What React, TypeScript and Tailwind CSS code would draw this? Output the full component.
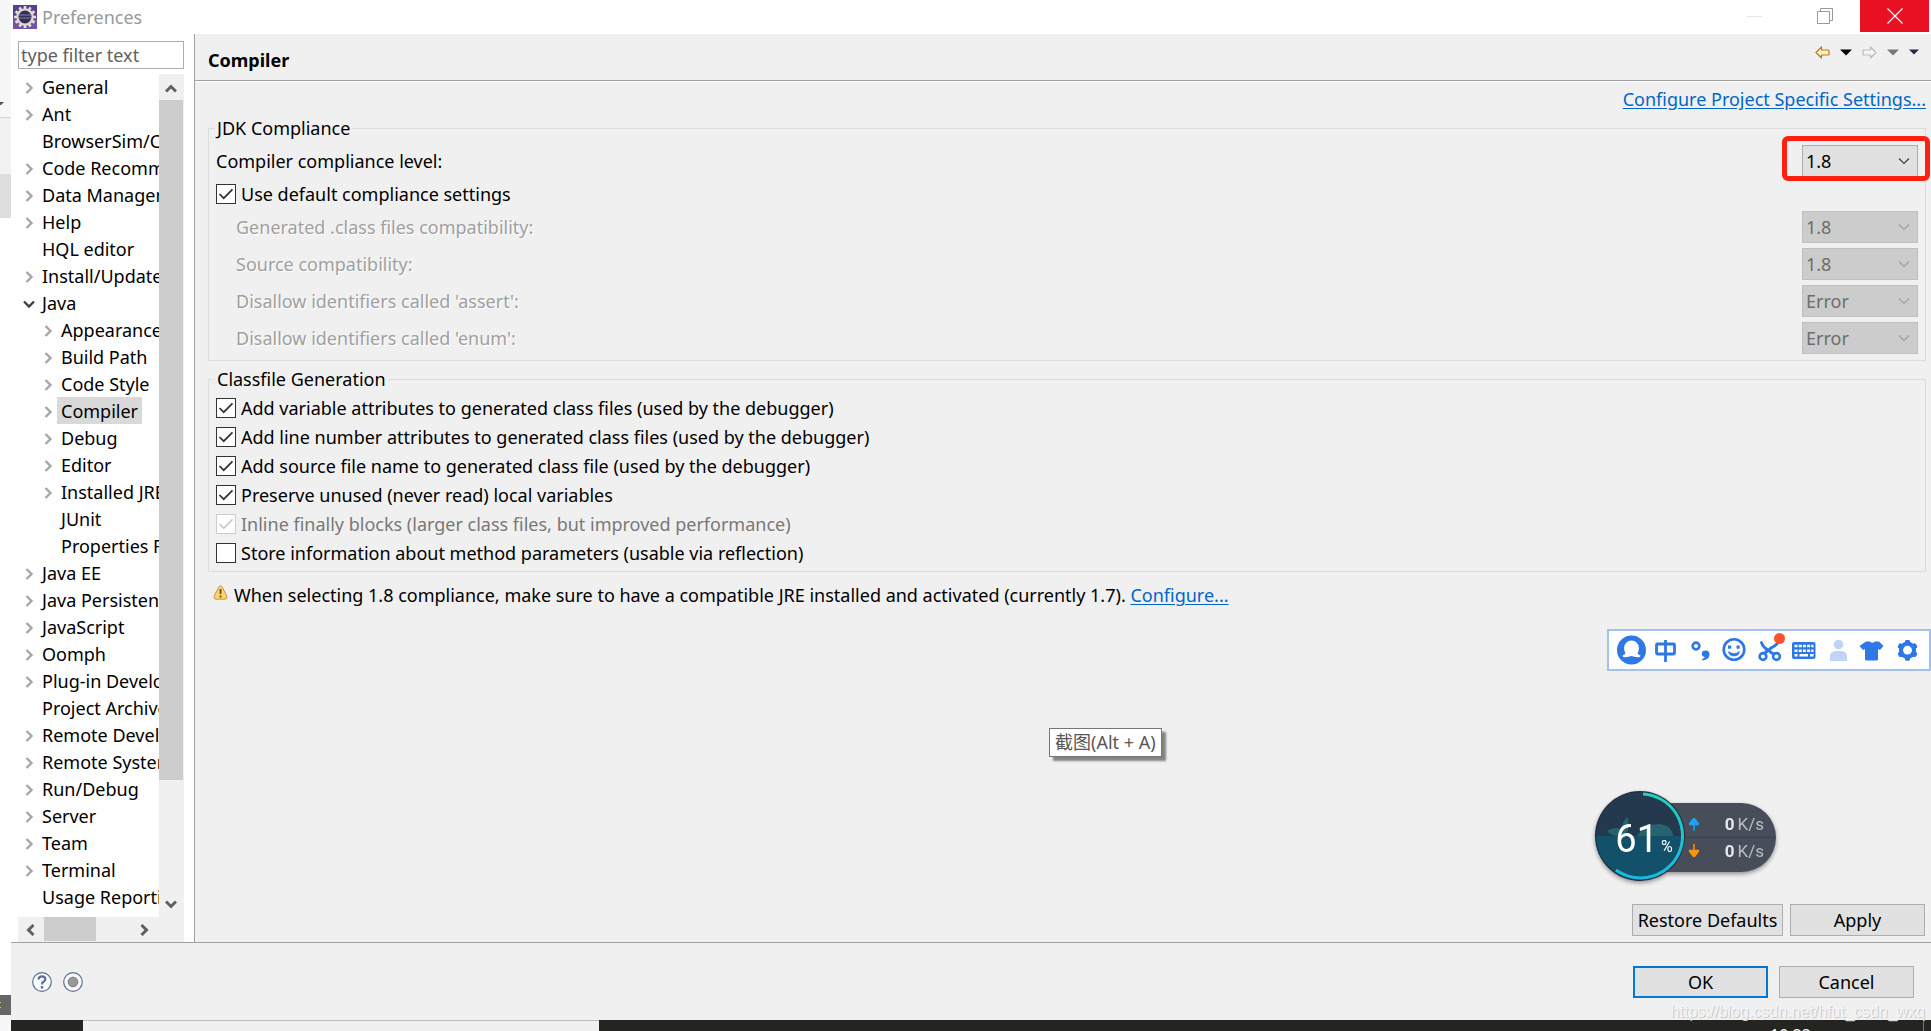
import React from "react";

type TreeItem = { label: string; level?: 0 | 1; state?: "closed" | "open" | "leaf"; selected?: boolean };

const TREE: TreeItem[] = [
  { label: "General" },
  { label: "Ant" },
  { label: "BrowserSim/Cordo", state: "leaf" },
  { label: "Code Recommenders" },
  { label: "Data Management" },
  { label: "Help" },
  { label: "HQL editor", state: "leaf" },
  { label: "Install/Update" },
  { label: "Java", state: "open" },
  { label: "Appearance", level: 1 },
  { label: "Build Path", level: 1 },
  { label: "Code Style", level: 1 },
  { label: "Compiler", level: 1, selected: true },
  { label: "Debug", level: 1 },
  { label: "Editor", level: 1 },
  { label: "Installed JREs", level: 1 },
  { label: "JUnit", level: 1, state: "leaf" },
  { label: "Properties Files", level: 1, state: "leaf" },
  { label: "Java EE" },
  { label: "Java Persistence" },
  { label: "JavaScript" },
  { label: "Oomph" },
  { label: "Plug-in Development" },
  { label: "Project Archives", state: "leaf" },
  { label: "Remote Development" },
  { label: "Remote Systems" },
  { label: "Run/Debug" },
  { label: "Server" },
  { label: "Team" },
  { label: "Terminal" },
  { label: "Usage Reporting", state: "leaf" },
];

const OVERRIDES = [
  { id: "target", label: "Generated .class files compatibility:", value: "1.8" },
  { id: "source", label: "Source compatibility:", value: "1.8" },
  { id: "assert", label: "Disallow identifiers called 'assert':", value: "Error" },
  { id: "enum", label: "Disallow identifiers called 'enum':", value: "Error" },
];

const CLASSFILE = [
  { label: "Add variable attributes to generated class files (used by the debugger)", checked: true },
  { label: "Add line number attributes to generated class files (used by the debugger)", checked: true },
  { label: "Add source file name to generated class file (used by the debugger)", checked: true },
  { label: "Preserve unused (never read) local variables", checked: true },
  { label: "Inline finally blocks (larger class files, but improved performance)", checked: true, disabled: true },
  { label: "Store information about method parameters (usable via reflection)", checked: false },
];

function Chevron({ className, d, width = 3 }: { className: string; d: string; width?: number }) {
  return (
    <svg viewBox="0 0 12 12" className={className} fill="none" stroke="currentColor" strokeWidth={width}>
      <path d={d} />
    </svg>
  );
}

const RIGHT = "M3.5 1 L8.5 6 L3.5 11";
const LEFT = "M8.5 1 L3.5 6 L8.5 11";
const DOWN = "M1 3.5 L6 8.5 L11 3.5";
const UP = "M1 8.5 L6 3.5 L11 8.5";

function TreeRow({ label, level = 0, state = "closed", selected }: TreeItem) {
  return (
    <li className={level ? "flex h-[27px] items-center pl-6" : "flex h-[27px] items-center pl-[5px]"}>
      <span className="flex w-[15px] shrink-0 pt-[3px]">
        {state === "closed" && <Chevron className="size-3 text-[#a6a6a6]" d={RIGHT} width={2.4} />}
        {state === "open" && <Chevron className="size-3 text-[#404040]" d={DOWN} width={2.4} />}
      </span>
      <button
        className={
          selected
            ? "h-full bg-[#d9d9d9] px-1 whitespace-nowrap"
            : "h-full px-1 whitespace-nowrap"
        }
      >
        {label}
      </button>
    </li>
  );
}

function Check({ label, checked, disabled }: { label: string; checked: boolean; disabled?: boolean }) {
  return (
    <label className={disabled ? "flex h-[29px] items-center gap-[5px] text-[#787878]" : "flex h-[29px] items-center gap-[5px]"}>
      <span className="relative flex size-5">
        <input
          type="checkbox"
          defaultChecked={checked}
          disabled={disabled}
          className="peer size-5 appearance-none border border-[#333] bg-white disabled:border-[#ccc]"
        />
        <svg
          viewBox="0 0 20 20"
          className="pointer-events-none absolute inset-0 hidden size-5 text-[#333] peer-checked:block peer-disabled:text-[#ccc]"
          fill="none"
          stroke="currentColor"
          strokeWidth="1.7"
        >
          <path d="M3.5 10 L7.7 14.2 L16.5 5.3" />
        </svg>
      </span>
      {label}
    </label>
  );
}

function Combo({ id, value, disabled }: { id: string; value: string; disabled?: boolean }) {
  return (
    <span className="relative flex w-[116px]">
      <select
        id={id}
        disabled={disabled}
        defaultValue={value}
        className="h-8 w-full appearance-none border border-[#adadad] bg-[#e1e1e1] pl-[3px] text-black disabled:border-[#bfbfbf] disabled:bg-[#ccc] disabled:text-[#6d6d6d] disabled:opacity-100"
      >
        <option>{value}</option>
      </select>
      <Chevron
        className={
          disabled
            ? "pointer-events-none absolute top-2.5 right-2 size-3 text-[#a0a0a0]"
            : "pointer-events-none absolute top-2.5 right-2 size-3 text-[#404040]"
        }
        d={DOWN}
        width={1.2}
      />
    </span>
  );
}

function EclipseIcon() {
  const teeth = Array.from({ length: 12 }, (_, i) => i * 30);
  return (
    <svg viewBox="0 0 24 24" className="size-6">
      <rect width="24" height="24" fill="#5b3f8c" />
      <rect y="14" width="24" height="10" fill="#7353a8" />
      {teeth.map((a) => (
        <rect key={a} x="10.7" y="1" width="2.6" height="4" fill="#e4e0d8" transform={`rotate(${a} 12 12)`} />
      ))}
      <circle cx="12" cy="12" r="7.6" fill="#353058" stroke="#dcd8d0" strokeWidth="2.2" />
      <path d="M6 10h12M6 13h12" stroke="#6a6496" strokeWidth="1.4" />
    </svg>
  );
}

function NavArrow({ className, flip, fill }: { className: string; flip?: boolean; fill: string }) {
  return (
    <svg viewBox="0 0 15 13" className={className} fill={fill} stroke="currentColor" strokeWidth="1.2" strokeLinejoin="round">
      <path d={flip ? "M14 6.5 L8.5 1 V4 H2 Q1 4 1 5 V8 Q1 9 2 9 H8.5 V12 Z" : "M1 6.5 L6.5 1 V4 H13 Q14 4 14 5 V8 Q14 9 13 9 H6.5 V12 Z"} />
    </svg>
  );
}

function Caret({ className }: { className: string }) {
  return (
    <svg viewBox="0 0 12 7" className={className} fill="currentColor">
      <path d="M0 0.5 H12 L6 6.5 Z" />
    </svg>
  );
}

function ImeBar() {
  const blue = "#2d78e6";
  return (
    <div className="absolute top-[629px] right-0 flex h-[42px] w-[324px] items-center border-2 border-[#a2c0f0] bg-white pl-2">
      <svg viewBox="0 0 308 38" className="h-[38px] w-[308px]" fill="none" stroke={blue} strokeWidth="2">
        <circle cx="14.5" cy="19" r="14.5" fill={blue} stroke="none" />
        <path
          d="M14.5 9.5 a7.5 7.500 0 0 1 7.500 7.500 q0 3 -1.500 5 q.5 1.500 3 2.500 q0 2.200 -3 1.800 q-3 -.3 -6 -1.300 q-3 1 -6 1.300 q-3 .4 -3 -1.800 q2.500 -1 3 -2.500 q-1.500 -2 -1.500 -5 a7.500 7.500 0 0 1 7.500 -7.500z"
          fill="#fff"
          stroke="none"
        />
        <g strokeWidth="2.8">
          <rect x="39.500" y="13" width="18" height="10" rx="1" />
          <path d="M48.500 9 V31" />
        </g>
        <circle cx="79" cy="15" r="3.400" strokeWidth="2.600" />
        <path d="M88.500 19.500 a4 4 0 0 1 4 4 q0 5 -7 6 q-1.500 -1 0 -1.600 q2 -.8 2.300 -2 q-3 -.5 -3 -3.200 a3.500 3.500 0 0 1 3.700 -3.200z" fill={blue} stroke="none" />
        <circle cx="117" cy="18.500" r="10.300" strokeWidth="2.600" />
        <path d="M111.500 20.500 q5.500 4 11 0 q-.5 4.500 -5.500 4.500 q-5 0 -5.500 -4.500z" fill={blue} strokeWidth=".6" />
        <rect x="111" y="14.500" width="3.200" height="3.200" fill={blue} stroke="none" />
        <rect x="119.500" y="14.500" width="3.200" height="3.200" fill={blue} stroke="none" />
        <path d="M144 10.500 q1 4 4 6.500 l9 6.500 M161 12 q-4 4 -7 5 l-7.500 6" strokeWidth="2.900" />
        <circle cx="146" cy="25.500" r="3.400" strokeWidth="2.600" />
        <circle cx="159.500" cy="25.500" r="3.400" strokeWidth="2.600" />
        <circle cx="162.500" cy="7.500" r="5.500" fill="#fb5331" stroke="none" />
        <rect x="175" y="11" width="23.500" height="17" rx="2" fill={blue} stroke="none" />
        <g stroke="#fff" strokeWidth="2.600">
          <path d="M177.500 15 H196.500" strokeDasharray="3 1.200" />
          <path d="M177.500 19.700 H196.500" strokeDasharray="3 1.200" />
          <path d="M177.500 24.300 h3 M182.500 24.300 h8.500 M193 24.300 h3.500" />
        </g>
        <g fill="#bfd5f8" stroke="none">
          <circle cx="221.500" cy="13.500" r="4.800" />
          <path d="M213 30 v-4 q0 -6 6 -6 h5 q6 0 6 6 v4z" />
        </g>
        <path d="M249 10.500 h4 q2 2.500 5 0 h4 l4.500 4.500 l-3.500 4 l-2 -1 v10 q0 1.500 -1.500 1.500 h-10 q-1.500 0 -1.500 -1.500 v-10 l-2 1 l-3.500 -4z" fill={blue} stroke="none" />
        <g fill={blue} stroke="none">
          {[0, 60, 120, 180, 240, 300].map((a) => (
            <rect key={a} x="288" y="9" width="5" height="20.500" rx="1.500" transform={`rotate(${a} 290.500 19.200)`} />
          ))}
          <circle cx="290.500" cy="19.200" r="8.600" />
          <circle cx="290.500" cy="19.200" r="4.400" fill="#fff" />
        </g>
      </svg>
    </div>
  );
}

function NetMonitor() {
  return (
    <div className="absolute top-[791px] right-[155px] flex h-[90px] w-[181px] items-center drop-shadow-[0_2px_2px_rgba(0,0,0,0.4)]">
      <div className="absolute top-3 right-0 flex h-[69px] w-[140px] flex-col justify-center rounded-r-full bg-[#484e59] font-[Roboto] text-[17px] text-[#b9bec6]">
        {[
          { color: "#18a4f4", d: "M5 13 V5 M0 6.5 L5 0 L10 6.5Z" },
          { color: "#ff9408", d: "M5 0 V8 M0 6.5 L5 13 L10 6.5Z" },
        ].map((r, i) => (
          <div
            key={r.color}
            className={i === 0 ? "flex h-[26px] items-center border-b border-[#3c424c] pr-3 pl-[53px]" : "flex h-[26px] items-center pr-3 pl-[53px]"}
          >
            <svg viewBox="0 0 10 13" className="mr-auto h-[13px] w-2.5" fill={r.color} stroke={r.color} strokeWidth="1.5">
              <path d={r.d} />
            </svg>
            <span className="mr-[3px] font-bold text-[#e4e7ec]">0</span>K/s
          </div>
        ))}
      </div>
      <div className="relative flex size-[90px] items-center justify-center text-white">
        <svg viewBox="0 0 90 90" className="absolute inset-0 size-[90px]">
          <defs>
            <clipPath id="dial">
              <circle cx="45" cy="45" r="44" />
            </clipPath>
            <linearGradient id="ring" x1="0" y1="0" x2="0" y2="1">
              <stop offset="0" stopColor="#22cfc0" />
              <stop offset="1" stopColor="#18b8e0" />
            </linearGradient>
          </defs>
          <circle cx="45" cy="45" r="45" fill="#1c2b3a" />
          <g clipPath="url(#dial)">
            <rect width="90" height="46" fill="#24394e" />
            <rect y="45" width="90" height="45" fill="#13506a" />
            <path d="M12 40 q8 -5 14 -2 q2 -8 6 -12 q3 7 1 13 q-3 6 -9 6 q-8 0 -12 -5z M42 45 q8 -12 22 -12 q13 1 14 12z" fill="#24646f" />
          </g>
          <path d="M48 3 A42 42 0 1 1 21 79" fill="none" stroke="url(#ring)" strokeWidth="3" />
        </svg>
        <span className="relative flex items-baseline gap-[3px] pt-1.5 pl-2 font-[Roboto]">
          <span className="text-[38px] leading-none">61</span>
          <span className="text-base leading-none">%</span>
        </span>
      </div>
    </div>
  );
}

function EdgeStrip() {
  return (
    <div className="flex w-[11px] shrink-0 flex-col overflow-hidden bg-white">
      <div className="flex h-[118px] items-end border-b border-[#d4d4d4] bg-[#f7f7f7] pb-3">
        <svg viewBox="0 0 4 3" className="h-[3px] w-1" fill="#555">
          <path d="M0 0 H4 L1 3 H0Z" />
        </svg>
      </div>
      <div className="h-14 bg-[#f2f2f2]" />
      <div className="h-11 bg-[#dedede]" />
      <div className="flex-1" />
      <div className="flex h-5 items-center bg-[#666]">
        <span className="h-1.5 w-px border-y border-[#e9b85a]" />
      </div>
      <div className="h-4 bg-[#f7f7f7]" />
    </div>
  );
}

const BUTTON = "h-8 border border-[#adadad] bg-[#e1e1e1]";

export default function App() {
  return (
    <div className="relative flex min-h-screen overflow-hidden bg-white font-['Noto_Sans','Noto_Sans_CJK_SC',sans-serif] text-[18px] leading-6 text-black">
      <EdgeStrip />
      <div className="flex min-w-0 flex-1 flex-col">
        <header className="flex h-[34px] items-start bg-white">
          <div className="flex h-[34px] items-center gap-[5px] pl-0.5 text-[#999]">
            <EclipseIcon />
            Preferences
          </div>
          <div className="ml-auto flex pr-0.5">
            <button aria-label="Minimize" className="flex h-8 w-[69px] items-center justify-center">
              <span className="h-px w-[15px] bg-[#e5e5e5]" />
            </button>
            <button aria-label="Restore" className="flex h-8 w-[71px] items-center justify-center">
              <svg viewBox="0 0 16 16" className="size-4" fill="none" stroke="#999">
                <path d="M.5 3.5 H12.5 V15.5 H.5Z M3.5 3.5 V.5 H15.5 V12.5 H12.5" />
              </svg>
            </button>
            <button aria-label="Close" className="flex h-8 w-[69px] items-center justify-center bg-[#e81123]">
              <svg viewBox="0 0 16 16" className="size-4" stroke="#fff" strokeWidth="1.2">
                <path d="M.5 .5 L15.5 15.5 M15.5 .5 L.5 15.5" />
              </svg>
            </button>
          </div>
        </header>

        <div className="flex min-h-0 flex-1">
          <aside className="flex w-[184px] shrink-0 flex-col border-r border-[#a0a0a0] bg-white pt-[7px] pr-2.5 pl-[7px]">
            <input
              aria-label="Filter"
              placeholder="type filter text"
              className="h-7 w-full border border-[#abadb3] px-0.5 placeholder:text-[#606060]"
            />
            <div className="mt-1 flex flex-1">
              <ul className="h-[844px] w-0 flex-1 overflow-hidden">
                {TREE.map((t) => (
                  <TreeRow key={t.label} {...t} />
                ))}
              </ul>
              <div className="mt-px flex w-[25px] flex-col items-center bg-[#f0f0f0] text-[#606060]">
                <button aria-label="Scroll up" className="flex h-[26px] items-center pt-1 pr-px">
                  <Chevron className="size-3" d={UP} />
                </button>
                <div className="mr-px h-[680px] w-6 bg-[#cdcdcd]" />
                <button aria-label="Scroll down" className="mt-auto flex h-[26px] items-center pr-px">
                  <Chevron className="size-3" d={DOWN} />
                </button>
              </div>
            </div>
            <div className="flex h-[25px] items-center bg-[#f0f0f0] text-[#606060]">
              <button aria-label="Scroll left" className="flex w-[26px] justify-center">
                <Chevron className="size-3" d={LEFT} />
              </button>
              <div className="h-6 w-[52px] self-start bg-[#cdcdcd]" />
              <button aria-label="Scroll right" className="mr-[27px] ml-auto flex w-[26px] justify-center">
                <Chevron className="size-3" d={RIGHT} />
              </button>
            </div>
          </aside>

          <main className="flex min-w-0 flex-1 flex-col bg-[#f0f0f0]">
            <div className="flex h-[47px] items-center border-b border-[#a0a0a0] pl-[13px]">
              <h1 className="pt-1.5 font-bold">Compiler</h1>
              <div className="mr-3 mb-2.5 ml-auto flex items-center gap-2.5">
                <button aria-label="Back">
                  <NavArrow className="h-[13px] w-[15px] text-[#b87a1c]" fill="#fdf0c0" />
                </button>
                <button aria-label="Back history">
                  <Caret className="h-[7px] w-3" />
                </button>
                <button aria-label="Forward">
                  <NavArrow className="h-[13px] w-[15px] text-[#bdbdbd]" flip fill="#f5f5f5" />
                </button>
                <button aria-label="Forward history">
                  <Caret className="h-[7px] w-3 text-[#777]" />
                </button>
                <button aria-label="Menu">
                  <Caret className="h-1.5 w-2.5 text-[#33204f]" />
                </button>
              </div>
            </div>
            <div className="flex flex-1 flex-col border-t border-white pr-[5px] pb-1.5 pl-[13px]">
              <a href="#project" className="mt-[5px] self-end text-[#0066cc] underline underline-offset-2">
                Configure Project Specific Settings...
              </a>
              <fieldset className="mt-[5px] border border-[#dcdcdc] pr-[7px] pb-1.5 pl-[7px]">
                <legend className="ml-[-1px] px-0.5">JDK Compliance</legend>
                <div className="mt-[5px] flex items-center justify-between">
                  <label htmlFor="level">Compiler compliance level:</label>
                  <span className="relative">
                    <Combo id="level" value="1.8" />
                    <span className="pointer-events-none absolute -top-[9px] -right-3 h-[45px] w-[148px] rounded-md border-[5px] border-[#ff2010]" />
                  </span>
                </div>
                <div className="py-0.5">
                  <Check label="Use default compliance settings" checked />
                </div>
                <div className="mt-px flex flex-col gap-[5px]">
                  {OVERRIDES.map((o) => (
                    <div key={o.id} className="flex items-center justify-between pl-5">
                      <label htmlFor={o.id} className="text-[#a0a0a0] [text-shadow:1px_1px_0_#fff]">
                        {o.label}
                      </label>
                      <Combo id={o.id} value={o.value} disabled />
                    </div>
                  ))}
                </div>
              </fieldset>
              <fieldset className="mt-1.5 border border-[#dcdcdc] pb-1 pl-[7px]">
                <legend className="ml-[-1px] px-0.5">Classfile Generation</legend>
                <div className="mt-0.5">
                  {CLASSFILE.map((c) => (
                    <Check key={c.label} {...c} />
                  ))}
                </div>
              </fieldset>
              <p className="mt-[11px] flex items-center gap-1.5 pl-[5px]">
                <svg viewBox="0 0 15 15" className="mb-1.5 size-[15px]">
                  <path d="M7.5 .8 Q8.6 .8 9.3 2.2 L13.8 11 Q14.8 14.2 12 14.2 H3 Q.2 14.2 1.2 11 L5.7 2.2 Q6.4 .8 7.5 .8Z" fill="#fbd374" stroke="#cf9440" />
                  <path d="M7.5 4 V9 M7.5 10.5 V12.5" stroke="#6b4a10" strokeWidth="1.8" />
                </svg>
                <span>
                  When selecting 1.8 compliance, make sure to have a compatible JRE installed and activated (currently 1.7).{" "}
                  <a href="#configure" className="text-[#0066cc] underline underline-offset-2">
                    Configure...
                  </a>
                </span>
              </p>
              <div className="mt-auto flex justify-end gap-[7px] pr-px">
                <button className={`${BUTTON} w-[151px] whitespace-nowrap`}>Restore Defaults</button>
                <button className={`${BUTTON} w-[135px]`}>Apply</button>
              </div>
            </div>
          </main>
        </div>

        <footer className="flex h-[78px] items-center gap-[11px] border-t border-[#a0a0a0] bg-[#f0f0f0] pr-[17px] pl-[21px]">
          <button aria-label="Help">
            <svg viewBox="0 0 20 20" className="size-5" fill="#f8fafc" stroke="#5b6e93">
              <circle cx="10" cy="10" r="9.3" strokeWidth="1.2" />
              <path d="M6.5 7.5 Q6.7 4.3 10 4.3 Q13.3 4.3 13.3 7.2 Q13.3 9 11.2 10 Q10 10.7 10 12.5" fill="none" strokeWidth="2.2" />
              <rect x="9" y="14.2" width="2" height="2" fill="#5b6e93" strokeWidth=".4" />
            </svg>
          </button>
          <button aria-label="Record">
            <svg viewBox="0 0 20 20" className="size-5" fill="#f8fafc" stroke="#5b6e93">
              <circle cx="10" cy="10" r="9.3" strokeWidth="1.2" />
              <circle cx="10" cy="10" r="4.8" fill="#999" stroke="#777" />
            </svg>
          </button>
          <button className="ml-auto h-8 w-[135px] border-2 border-[#0078d7] bg-[#e1e1e1]">OK</button>
          <button className={`${BUTTON} w-[135px]`}>Cancel</button>
        </footer>

        <div className="flex h-[11px] bg-[#242420]">
          <div className="w-[72px]" />
          <div className="w-[516px] border-t border-[#bdbdbd] bg-[#f0f0f0]" />
          <div className="ml-auto h-full w-[153px] overflow-hidden pt-[3px] text-base text-white">10:22</div>
          <div className="w-px bg-[#777]" />
          <div className="w-[7px]" />
        </div>
      </div>

      <ImeBar />
      <div className="absolute top-[728px] left-[1049px] border border-[#767676] bg-white px-[5px] leading-[27px] text-[#575757] shadow-[4px_4px_2px_rgba(0,0,0,0.45)]">
        截图(Alt + A)
      </div>
      <NetMonitor />
      <div className="pointer-events-none absolute right-1.5 bottom-[7px] font-['Liberation_Sans'] text-base text-[#f4f4f4] [text-shadow:1px_1px_0_#c8c8c8]">
        https://blog.csdn.net/hfut_csdn_wxq
      </div>
    </div>
  );
}
